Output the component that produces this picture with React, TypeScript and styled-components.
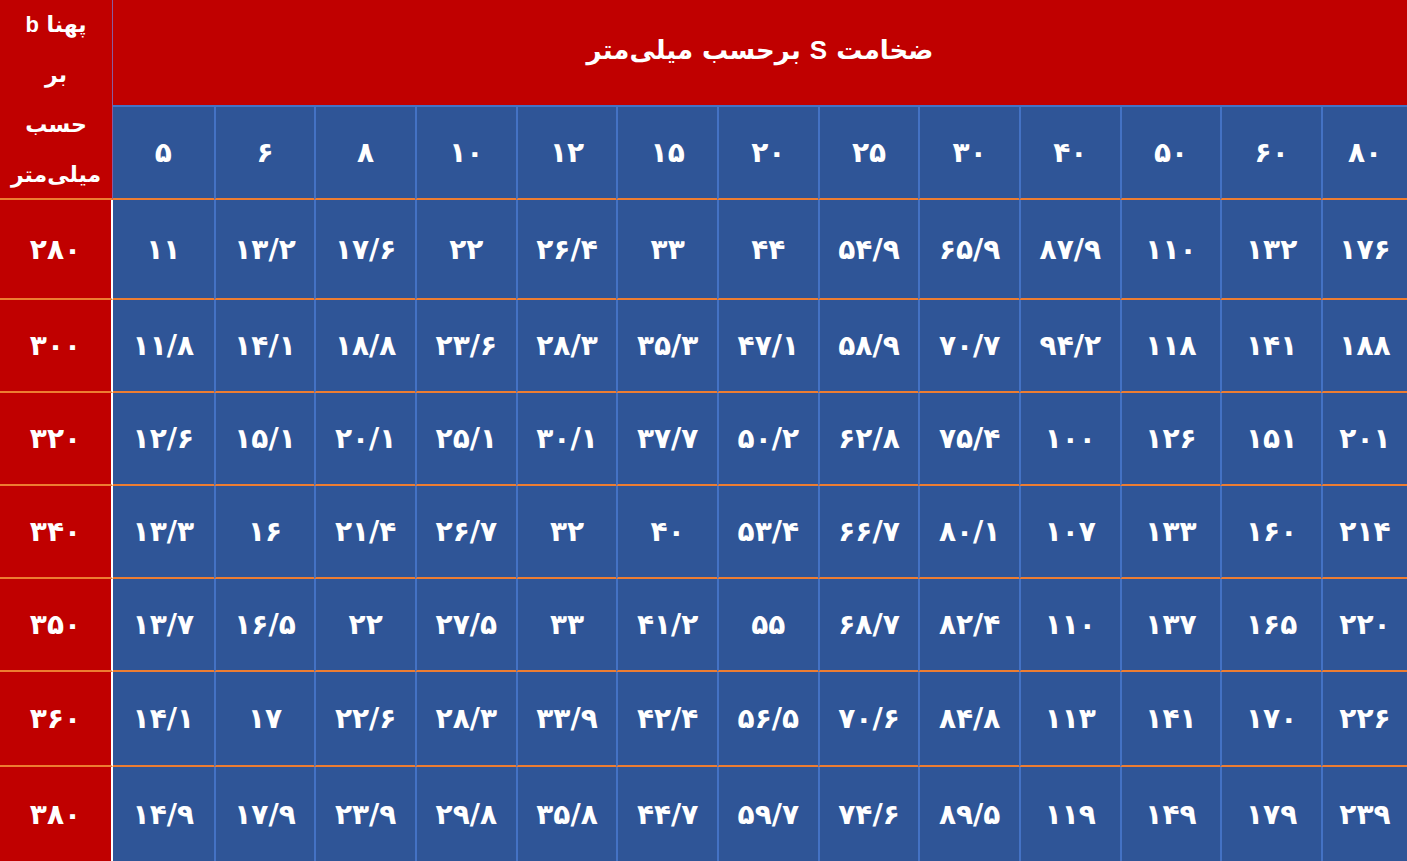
import styled, { createGlobalStyle } from 'styled-components'

const thickness = ['5', '6', '8', '10', '12', '15', '20', '25', '30', '40', '50', '60', '80']

const rows: { width: string; values: string[] }[] = [
  { width: '280', values: ['11', '13/2', '17/6', '22', '26/4', '33', '44', '54/9', '65/9', '87/9', '110', '132', '176'] },
  { width: '300', values: ['11/8', '14/1', '18/8', '23/6', '28/3', '35/3', '47/1', '58/9', '70/7', '94/2', '118', '141', '188'] },
  { width: '320', values: ['12/6', '15/1', '20/1', '25/1', '30/1', '37/7', '50/2', '62/8', '75/4', '100', '126', '151', '201'] },
  { width: '340', values: ['13/3', '16', '21/4', '26/7', '32', '40', '53/4', '66/7', '80/1', '107', '133', '160', '214'] },
  { width: '350', values: ['13/7', '16/5', '22', '27/5', '33', '41/2', '55', '68/7', '82/4', '110', '137', '165', '220'] },
  { width: '360', values: ['14/1', '17', '22/6', '28/3', '33/9', '42/4', '56/5', '70/6', '84/8', '113', '141', '170', '226'] },
  { width: '380', values: ['14/9', '17/9', '23/9', '29/8', '35/8', '44/7', '59/7', '74/6', '89/5', '119', '149', '179', '239'] }
]

const toPersian = (s: string) => s.replace(/[0-9]/g, (d) => String.fromCharCode(0x06f0 + Number(d)))

function App() {
  return (
    <>
      <GlobalStyle />
      <Grid>
        <WidthHead>
          <HeadLine>
            پهنا <Latin>b</Latin>
          </HeadLine>
          <HeadLine>بر</HeadLine>
          <HeadLine>حسب</HeadLine>
          <HeadLine>میلی‌متر</HeadLine>
        </WidthHead>
        <TitleHead>
          <TitleText>
            ضخامت <Latin>S</Latin> برحسب میلی‌متر
          </TitleText>
        </TitleHead>
        {thickness.map((t) => (
          <ThicknessHead key={t}>{toPersian(t)}</ThicknessHead>
        ))}
        {rows.map((r, ri) => (
          <RowGroup key={r.width}>
            <WidthCell $last={ri === rows.length - 1}>{toPersian(r.width)}</WidthCell>
            {r.values.map((v, i) => (
              <ValueCell key={i} $last={ri === rows.length - 1}>
                {toPersian(v)}
              </ValueCell>
            ))}
          </RowGroup>
        ))}
      </Grid>
    </>
  )
}

const GlobalStyle = createGlobalStyle`
  html, body {
    margin: 0;
    padding: 0;
    background: #2f5597;
    overflow: hidden;
  }
  body {
    font-family: "DejaVu Sans", "Noto Sans", sans-serif;
  }
  * {
    box-sizing: border-box;
  }
`

const cell = `
  display: flex;
  align-items: center;
  justify-content: center;
  color: #ffffff;
  font-weight: bold;
  white-space: nowrap;
`

const { Grid, RowGroup, WidthHead, HeadLine, TitleHead, TitleText, ThicknessHead, WidthCell, ValueCell, Latin } = {
  Grid: styled.div`
    width: 1407px;
    height: 861px;
    display: grid;
    grid-template-columns: 113px repeat(12, 1fr) 86px;
    grid-template-rows: 107px 93px 100px 93px 93px 93px 93px 95px 94px;
    background: #2f5597;
  `,
  RowGroup: styled.div`
    display: contents;
  `,
  WidthHead: styled.div`
    ${cell}
    grid-row: 1 / span 2;
    flex-direction: column;
    background: #c00000;
    direction: rtl;
    font-size: 22px;
    line-height: 50px;
    padding-top: 2px;
    border-right: 1px solid #8a5a9e;
    border-bottom: 2px solid #ed7d31;
  `,
  HeadLine: styled.span`
    display: block;
  `,
  TitleHead: styled.div`
    ${cell}
    grid-column: 2 / span 13;
    background: #c00000;
    font-size: 26px;
    padding-bottom: 4px;
    border-bottom: 2px solid #4472c4;
  `,
  TitleText: styled.span`
    direction: rtl;
  `,
  ThicknessHead: styled.div`
    ${cell}
    background: #2f5597;
    font-size: 28px;
    border-left: 2px solid #4472c4;
    border-bottom: 2px solid #ed7d31;
    &:nth-child(3) {
      border-left: none;
    }
  `,
  WidthCell: styled.div<{ $last: boolean }>`
    ${cell}
    background: #c00000;
    font-size: 28px;
    border-right: 2px solid #ffffff;
    border-bottom: ${({ $last }) => ($last ? 'none' : '2px solid #ed7d31')};
  `,
  ValueCell: styled.div<{ $last: boolean }>`
    ${cell}
    background: #2f5597;
    font-size: 28px;
    letter-spacing: -1px;
    border-left: 2px solid #4472c4;
    border-bottom: ${({ $last }) => ($last ? 'none' : '2px solid #ed7d31')};
    &:nth-child(2) {
      border-left: none;
    }
  `,
  Latin: styled.span`
    font-family: "Liberation Sans", Arial, sans-serif;
    font-weight: bold;
  `
}

export default App
